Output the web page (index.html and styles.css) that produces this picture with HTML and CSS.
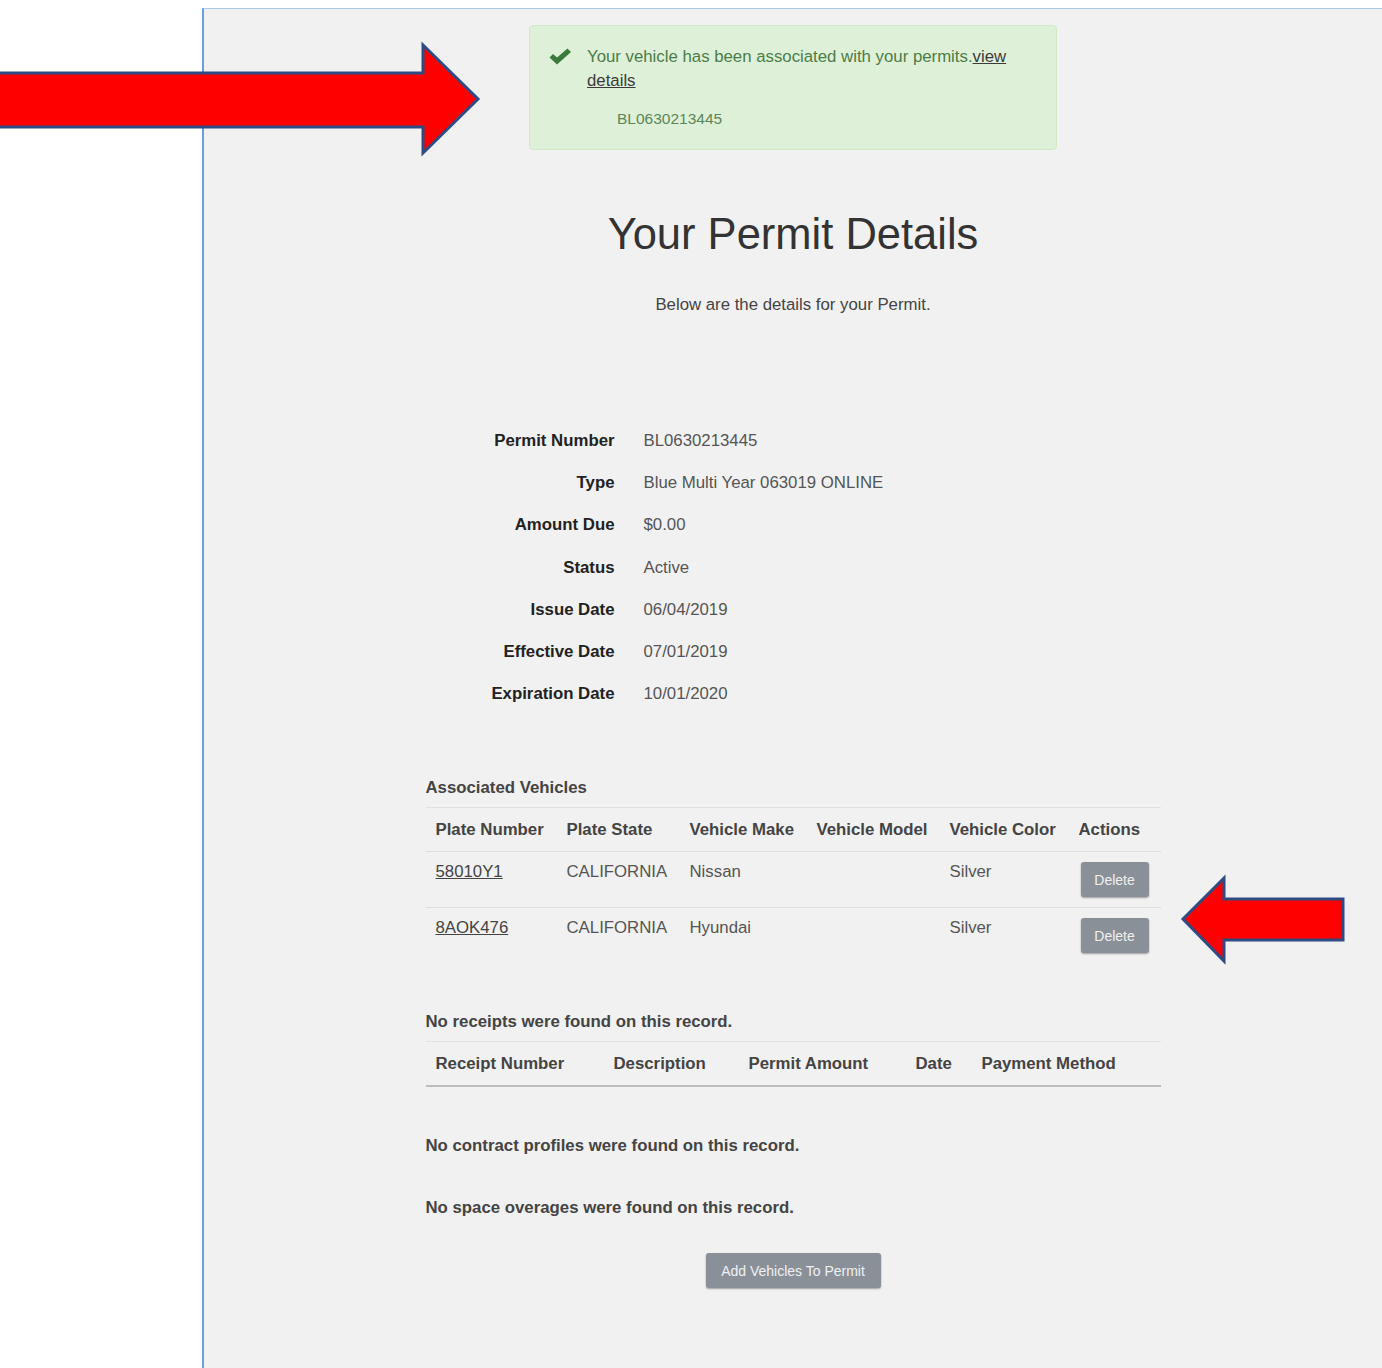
FILE: index.html
```html
<!DOCTYPE html>
<html lang="en">
<head>
    <meta charset="UTF-8">
    <meta name="viewport" content="width=device-width, initial-scale=1.0">
    <title>Your Permit Details</title>
    <link rel="stylesheet" href="styles.css">
</head>
<body>
    <div class="panel">
        <div class="alert">
            <svg class="alert-icon" viewBox="0 0 24 18" width="24" height="18">
                <path d="M1.5 9.5 L5 6 L9 9.5 L19.5 0.5 L23 4 L9 16.5 Z" fill="#3a7a3a"/>
            </svg>
            <div class="alert-body">
                <p>Your vehicle has been associated with your permits.<a href="#">view details</a></p>
                <ul class="alert-list">
                    <li>BL0630213445</li>
                </ul>
            </div>
        </div>

        <h1>Your Permit Details</h1>
        <p class="intro">Below are the details for your Permit.</p>

        <div class="content">
            <dl class="details">
                <dt>Permit Number</dt><dd>BL0630213445</dd>
                <dt>Type</dt><dd>Blue Multi Year 063019 ONLINE</dd>
                <dt>Amount Due</dt><dd>$0.00</dd>
                <dt>Status</dt><dd>Active</dd>
                <dt>Issue Date</dt><dd>06/04/2019</dd>
                <dt>Effective Date</dt><dd>07/01/2019</dd>
                <dt>Expiration Date</dt><dd>10/01/2020</dd>
            </dl>

            <h4 class="section-title vehicles-title">Associated Vehicles</h4>
            <table class="grid vehicles">
                <thead>
                    <tr>
                        <th>Plate Number</th>
                        <th>Plate State</th>
                        <th>Vehicle Make</th>
                        <th>Vehicle Model</th>
                        <th>Vehicle Color</th>
                        <th>Actions</th>
                    </tr>
                </thead>
                <tbody>
                    <tr>
                        <td><a href="#">58010Y1</a></td>
                        <td>CALIFORNIA</td>
                        <td>Nissan</td>
                        <td></td>
                        <td>Silver</td>
                        <td><button class="btn btn-small">Delete</button></td>
                    </tr>
                    <tr>
                        <td><a href="#">8AOK476</a></td>
                        <td>CALIFORNIA</td>
                        <td>Hyundai</td>
                        <td></td>
                        <td>Silver</td>
                        <td><button class="btn btn-small">Delete</button></td>
                    </tr>
                </tbody>
            </table>

            <h4 class="section-title receipts-title">No receipts were found on this record.</h4>
            <table class="grid receipts">
                <thead>
                    <tr>
                        <th>Receipt Number</th>
                        <th>Description</th>
                        <th>Permit Amount</th>
                        <th>Date</th>
                        <th>Payment Method</th>
                    </tr>
                </thead>
            </table>

            <h4 class="section-title contracts-title">No contract profiles were found on this record.</h4>
            <h4 class="section-title overages-title">No space overages were found on this record.</h4>

            <div class="actions">
                <button class="btn btn-add">Add Vehicles To Permit</button>
            </div>
        </div>
    </div>

    <!-- annotation arrows drawn over the screenshot -->
    <svg class="arrow arrow-right" width="490" height="170" viewBox="0 0 490 170">
        <polygon points="-10,73 423,73 423,45 478,99 423,153 423,127 -10,127" fill="#ff0000" stroke="#2f4b84" stroke-width="3" stroke-linejoin="miter"/>
    </svg>
    <svg class="arrow arrow-left" width="200" height="110" viewBox="1170 860 200 110">
        <polygon points="1183,919 1224,878 1224,899 1343,899 1343,940 1224,940 1224,961" fill="#ff0000" stroke="#2f4b84" stroke-width="3" stroke-linejoin="miter"/>
    </svg>
</body>
</html>
```

FILE: styles.css
```css
* {
    box-sizing: border-box;
}
body {
    margin: 0;
    background: #fff;
    font-family: "Liberation Sans", Arial, sans-serif;
    font-size: 16.8px;
    line-height: 24px;
    color: #555;
}
.panel {
    margin: 8px 0 0 202px;
    min-height: 1360px;
    padding-top: 16px;
    background: #f1f1f1;
    border-left: 2px solid #6d9fd6;
    border-top: 1px solid #a9c7e6;
}

/* success alert */
.alert {
    display: flex;
    width: 528px;
    margin: 0 auto;
    padding: 19px 48px 18px 18px;
    background: #dff0d8;
    border: 1px solid #d3e8c8;
    border-radius: 4px;
    color: #4a7d48;
}
.alert-icon {
    flex: none;
    margin: 3px 15px 0 0;
}
.alert-body p {
    margin: 0;
}
.alert-body a {
    color: #3b3b3b;
    text-decoration: underline;
}
.alert-list {
    list-style: none;
    margin: 14px 0 0;
    padding-left: 30px;
    font-size: 15.5px;
    color: #5b8658;
}

h1 {
    margin: 61px 0 0;
    font-size: 43.5px;
    line-height: 46px;
    font-weight: normal;
    text-align: center;
    color: #333;
}
.intro {
    margin: 36px 0 0;
    text-align: center;
    color: #444;
}

.content {
    width: 735px;
    margin: 0 auto;
}

/* permit details */
.details {
    display: grid;
    grid-template-columns: 189px 1fr;
    column-gap: 29px;
    margin: 103px 0 0;
}
.details dt,
.details dd {
    margin: 0;
    height: 42.2px;
    line-height: 42px;
}
.details dt {
    text-align: right;
    font-weight: bold;
    color: #222;
}
.details dd {
    color: #555;
}

.section-title {
    margin: 0;
    font-size: 16.8px;
    font-weight: bold;
    color: #444;
}
.vehicles-title {
    margin-top: 61px;
}
.receipts-title {
    margin-top: 47px;
}
.contracts-title {
    margin-top: 47px;
}
.overages-title {
    margin-top: 38px;
}

/* tables */
.grid {
    width: 100%;
    margin-top: 7px;
    border-collapse: collapse;
    table-layout: fixed;
}
.grid th {
    padding: 10px 10px 9px;
    text-align: left;
    font-weight: bold;
    color: #444;
    border-top: 1px solid #e2e2e2;
    white-space: nowrap;
}
.grid td {
    padding: 8px 10px 10px;
    vertical-align: top;
    border-top: 1px solid #dedede;
    color: #555;
    white-space: nowrap;
}
.grid td a {
    color: #444;
    text-decoration: underline;
}
.vehicles th:nth-child(1) { width: 131px; }
.vehicles th:nth-child(2) { width: 123px; }
.vehicles th:nth-child(3) { width: 127px; }
.vehicles th:nth-child(4) { width: 133px; }
.vehicles th:nth-child(5) { width: 129px; }
.vehicles th:nth-child(6) { width: 92px; }
.vehicles td:last-child {
    padding-top: 10px;
    padding-left: 12px;
}
.receipts thead tr {
    border-bottom: 2px solid #bcbcbc;
}
.receipts th:nth-child(1) { width: 178px; }
.receipts th:nth-child(2) { width: 135px; }
.receipts th:nth-child(3) { width: 167px; }
.receipts th:nth-child(4) { width: 66px; }
.receipts th:nth-child(5) { width: 189px; }

/* buttons */
.btn {
    display: inline-block;
    border: none;
    border-radius: 3px;
    background: #8a9098;
    color: #eef0f2;
    font-family: "Liberation Sans", Arial, sans-serif;
    font-size: 14px;
    cursor: pointer;
    box-shadow: 0 1px 2px rgba(0, 0, 0, 0.35);
}
.btn-small {
    width: 68px;
    height: 35px;
    padding: 0;
}
.actions {
    margin-top: 33px;
    text-align: center;
}
.btn-add {
    width: 175px;
    height: 35px;
    padding: 0;
}

/* annotation arrows */
.arrow {
    position: absolute;
    overflow: visible;
}
.arrow-right {
    left: 0;
    top: 0;
}
.arrow-left {
    left: 1170px;
    top: 860px;
}
```
